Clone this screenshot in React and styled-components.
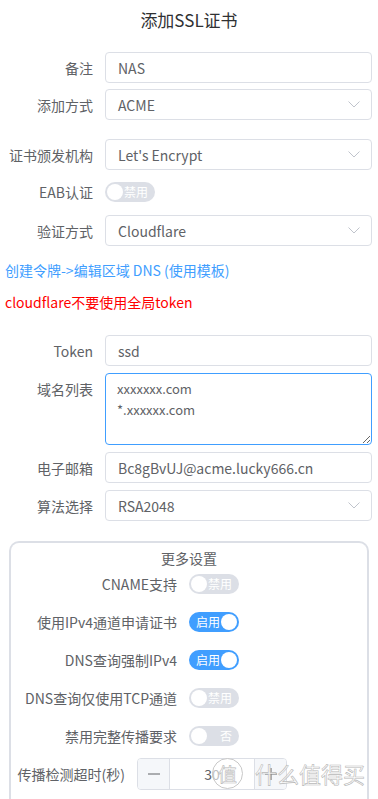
import React from 'react'
import styled, { createGlobalStyle } from 'styled-components'

const GlobalStyle = createGlobalStyle`
    html, body {
        margin: 0;
        padding: 0;
        background: #fff;
    }
    body {
        font-family: "Noto Sans CJK SC", "Noto Sans", sans-serif;
        color: #606266;
    }
    * { box-sizing: border-box; }
`

const Page = styled.div`
    position: relative;
    width: 378px;
    height: 799px;
    overflow: hidden;
`

const Title = styled.div`
    height: 40px;
    line-height: 40px;
    text-align: center;
    font-size: 17px;
    color: #303133;
`

const Row = styled.div`
    display: flex;
    align-items: ${p => p.$align || 'center'};
    min-height: ${p => p.$h || 31}px;
    margin-top: ${p => p.$mt || 0}px;
    padding-left: ${p => p.$pl ?? 5}px;
    padding-right: ${p => p.$pr ?? 6}px;
`

const Label = styled.label`
    flex-shrink: 0;
    ${p => (p.$fixed ? `width: ${p.$w}px;` : `min-width: ${p.$w || 100}px;`)}
    padding-right: 12px;
    padding-top: ${p => p.$pt || 0}px;
    text-align: right;
    font-size: 14px;
    line-height: 20px;
    color: #606266;
    white-space: nowrap;
    display: flex;
    justify-content: flex-end;
`

const Box = styled.div`
    flex: 1;
    display: flex;
    align-items: center;
    justify-content: space-between;
    height: 31px;
    padding: 0 11px 0 12px;
    border: 1px solid #dcdfe6;
    border-radius: 4px;
    font-size: 14px;
    color: #606266;
    background: #fff;
`

const Area = styled.textarea`
    flex: 1;
    height: 72px;
    padding: 4px 11px;
    border: 1px solid #409eff;
    border-radius: 4px;
    font-family: inherit;
    font-size: 13px;
    line-height: 21px;
    color: #606266;
    outline: none;
    resize: vertical;
`

const Note = styled.div`
    padding-left: 5px;
    margin-top: ${p => p.$mt || 0}px;
    font-size: 14px;
    line-height: 20px;
    color: ${p => p.$color};
`

const Chevron = () => (
    <svg width="12" height="7" viewBox="0 0 12 7">
        <polyline points="0.5,0.5 6,6 11.5,0.5" fill="none" stroke="#c0c4cc" strokeWidth="1" />
    </svg>
)

const Input = ({ value }) => <Box>{value}</Box>

const Select = ({ value }) => (
    <Box>
        <span>{value}</span>
        <Chevron />
    </Box>
)

const SwitchTrack = styled.div`
    position: relative;
    flex-shrink: 0;
    width: 50px;
    height: 20px;
    border-radius: 10px;
    background: ${p => (p.$on ? '#409eff' : '#dcdfe6')};
    display: flex;
    align-items: center;
    justify-content: ${p => (p.$on ? 'flex-start' : 'flex-end')};
    padding-left: ${p => (p.$on ? 7 : 0)}px;
    padding-right: ${p => (p.$on ? 0 : 7)}px;
    font-size: 12px;
    color: #fff;
`

const Knob = styled.span`
    position: absolute;
    top: 2px;
    ${p => (p.$on ? 'right: 2px;' : 'left: 2px;')}
    width: 16px;
    height: 16px;
    border-radius: 50%;
    background: #fff;
`

const Switch = ({ on, text }) => (
    <SwitchTrack $on={on}>
        <span>{text}</span>
        <Knob $on={on} />
    </SwitchTrack>
)

const Panel = styled.div`
    margin: 20px 9px 0;
    height: 280px;
    border: 2px solid #dcdfe6;
    border-bottom: none;
    border-radius: 10px 10px 0 0;
    padding-top: 5px;
`

const PanelTitle = styled.div`
    text-align: center;
    font-size: 14px;
    line-height: 20px;
    color: #606266;
`

const Stepper = styled.div`
    display: flex;
    flex-shrink: 0;
    width: 150px;
    height: 32px;
    border: 1px solid #dcdfe6;
    border-radius: 4px;
    overflow: hidden;
`

const StepBtn = styled.div`
    width: 32px;
    display: flex;
    align-items: center;
    justify-content: center;
    background: #f5f7fa;
    ${p => (p.$side === 'left' ? 'border-right: 1px solid #dcdfe6;' : 'border-left: 1px solid #dcdfe6;')}
`

const StepValue = styled.div`
    flex: 1;
    display: flex;
    align-items: center;
    justify-content: center;
    font-size: 14px;
    color: #606266;
`

const Minus = () => (
    <svg width="12" height="12" viewBox="0 0 12 12">
        <line x1="0" y1="6" x2="12" y2="6" stroke="#606266" strokeWidth="1" />
    </svg>
)

const Plus = () => (
    <svg width="12" height="12" viewBox="0 0 12 12">
        <line x1="0" y1="6" x2="12" y2="6" stroke="#606266" strokeWidth="1" />
        <line x1="6" y1="0" x2="6" y2="12" stroke="#606266" strokeWidth="1" />
    </svg>
)

const Watermark = styled.div`
    position: absolute;
    left: 212px;
    top: 757px;
    display: flex;
    align-items: center;
    gap: 12px;
    pointer-events: none;
    color: rgba(255, 255, 255, 0.85);
    -webkit-text-stroke: 0.6px #b8b8b8;
    font-size: 22px;
`

const WmBadge = styled.span`
    width: 31px;
    height: 31px;
    border-radius: 50%;
    border: 1.5px solid #c8c8c8;
    background: rgba(255, 255, 255, 0.6);
    display: flex;
    align-items: center;
    justify-content: center;
    font-size: 19px;
`

const settings = [
    { label: 'CNAME支持', on: false, text: '禁用', mt: 0 },
    { label: '使用IPv4通道申请证书', on: true, text: '启用', mt: 7 },
    { label: 'DNS查询强制IPv4', on: true, text: '启用', mt: 7 },
    { label: 'DNS查询仅使用TCP通道', on: false, text: '禁用', mt: 7 },
    { label: '禁用完整传播要求', on: false, text: '否', mt: 7 },
]

export default function App() {
    return (
        <Page>
            <GlobalStyle />
            <Title>添加SSL证书</Title>
            <Row $mt={12}>
                <Label>备注</Label>
                <Input value="NAS" />
            </Row>
            <Row $mt={6}>
                <Label>添加方式</Label>
                <Select value="ACME" />
            </Row>
            <Row $mt={19}>
                <Label>证书颁发机构</Label>
                <Select value="Let's Encrypt" />
            </Row>
            <Row $mt={6}>
                <Label>EAB认证</Label>
                <Switch on={false} text="禁用" />
            </Row>
            <Row $mt={8}>
                <Label>验证方式</Label>
                <Select value="Cloudflare" />
            </Row>
            <Note $mt={14} $color="#409eff">创建令牌-&gt;编辑区域 DNS (使用模板)</Note>
            <Note $mt={12} $color="#ff0000">cloudflare不要使用全局token</Note>
            <Row $mt={23}>
                <Label>Token</Label>
                <Input value="ssd" />
            </Row>
            <Row $mt={7} $h={72} $align="flex-start">
                <Label $pt={6}>域名列表</Label>
                <Area readOnly defaultValue={'xxxxxxx.com\n*.xxxxxx.com'} />
            </Row>
            <Row $mt={7}>
                <Label>电子邮箱</Label>
                <Input value="Bc8gBvUJ@acme.lucky666.cn" />
            </Row>
            <Row $mt={7}>
                <Label>算法选择</Label>
                <Select value="RSA2048" />
            </Row>
            <Panel>
                <PanelTitle>更多设置</PanelTitle>
                {settings.map(s => (
                    <Row key={s.label} $mt={s.mt} $pl={0} $pr={0}>
                        <Label $fixed $w={178}>{s.label}</Label>
                        <Switch on={s.on} text={s.text} />
                    </Row>
                ))}
                <Row $mt={7} $h={32} $pl={0} $pr={0}>
                    <Label $fixed $w={126}>传播检测超时(秒)</Label>
                    <Stepper>
                        <StepBtn $side="left"><Minus /></StepBtn>
                        <StepValue>30</StepValue>
                        <StepBtn $side="right"><Plus /></StepBtn>
                    </Stepper>
                </Row>
            </Panel>
            <Watermark>
                <WmBadge>值</WmBadge>
                <span>什么值得买</span>
            </Watermark>
        </Page>
    )
}
